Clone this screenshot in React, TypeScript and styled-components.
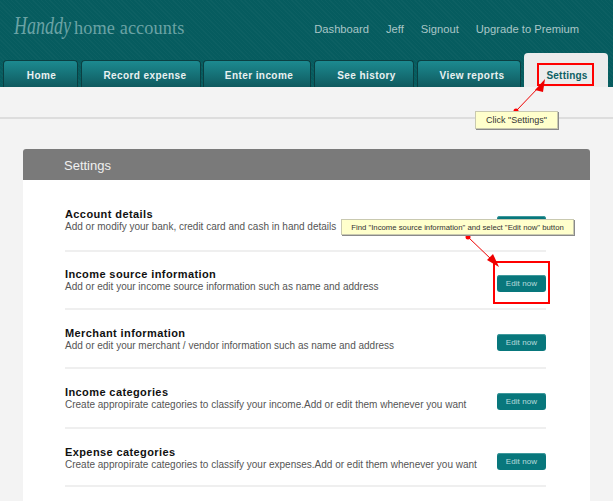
import React from "react";
import styled, { createGlobalStyle } from "styled-components";

const Global = createGlobalStyle`
  html, body { margin: 0; padding: 0; background: #f3f3f3; overflow: hidden; }
  body { font-family: "Liberation Sans", Arial, sans-serif; }
`;

const Page = styled.div`
  position: relative;
  display: flex;
  flex-direction: column;
  width: 613px;
  height: 501px;
  overflow: hidden;
  background: #f3f3f3;
`;

const Header = styled.header`
  height: 87px;
  flex: none;
  display: flex;
  flex-direction: column;
  justify-content: space-between;
  background-color: #065c5f;
  background-image: repeating-linear-gradient(45deg, rgba(255,255,255,0.025) 0 1px, transparent 1px 3px);
`;

const TopBar = styled.div`
  display: flex;
  justify-content: space-between;
  align-items: flex-start;
  padding: 13px 34px 0 14px;
`;

const Logo = styled.div`
  display: flex;
  align-items: baseline;
  color: #6ba3a5;
  font-family: "Liberation Serif", serif;
  line-height: 26px;
`;

const LogoScript = styled.span`
  display: inline-block;
  width: 57px;
  margin-right: 3px;
  font-size: 25px;
  font-style: italic;
  white-space: nowrap;
  transform: scaleX(0.72);
  transform-origin: left center;
`;

const LogoText = styled.span`
  font-size: 18.3px;
  letter-spacing: 0.1px;
`;

const TopNav = styled.nav`
  display: flex;
  gap: 17px;
  padding-top: 8px;
`;

const TopLink = styled.span`
  color: #a9c6c7;
  font-size: 11.2px;
  line-height: 16px;
`;

const Tabs = styled.div`
  display: flex;
  align-items: flex-end;
  padding-left: 3px;
`;

const Tab = styled.div<{ $w: number; $gap: number; $shift?: number; $active?: boolean }>`
  box-sizing: border-box;
  width: ${(p) => p.$w}px;
  height: ${(p) => (p.$active ? 34 : 27)}px;
  margin-right: ${(p) => p.$gap}px;
  padding: ${(p) => (p.$active ? "10px" : "2px")} 0 0 ${(p) => p.$shift ?? 0}px;
  display: flex;
  align-items: center;
  justify-content: center;
  border-radius: 4px 4px 0 0;
  font-size: 10px;
  font-weight: bold;
  letter-spacing: ${(p) => (p.$active ? 0.2 : 0.42)}px;
  color: ${(p) => (p.$active ? "#0c5f63" : "#e9f1f1")};
  border: ${(p) => (p.$active ? "0" : "1px solid #0b3f42")};
  border-bottom: 0;
  background: ${(p) => (p.$active ? "#ececec" : "linear-gradient(#1c8a90, #0f5a5f)")};
`;

const SubBar = styled.div`
  flex: none;
  height: 30px;
  border-bottom: 2px solid #dddddd;
`;

const Card = styled.section`
  flex: 1;
  margin: 30px 23px 0;
  background: #fff;
  border-radius: 3px 3px 0 0;
`;

const CardHead = styled.h2`
  box-sizing: border-box;
  margin: 0;
  height: 31px;
  padding: 2px 0 0 41px;
  display: flex;
  align-items: center;
  background: #7a7a7a;
  color: #f0f0f0;
  font-size: 13px;
  font-weight: normal;
  border-radius: 3px 3px 0 0;
`;

const Rows = styled.div`
  padding: 0 44px 0 42px;
`;

const Row = styled.div<{ $h: number; $pb: number; $lift: number }>`
  box-sizing: border-box;
  height: ${(p) => p.$h}px;
  padding-bottom: ${(p) => p.$pb}px;
  display: flex;
  justify-content: space-between;
  align-items: flex-end;
  border-bottom: 2px solid #efefef;
  & > div { margin-bottom: ${(p) => p.$lift}px; }
`;

const RowText = styled.div`
  display: flex;
  flex-direction: column;
`;

const RowTitle = styled.div`
  color: #111;
  font-size: 11px;
  font-weight: bold;
  line-height: 12px;
  letter-spacing: 0.4px;
`;

const RowDesc = styled.div`
  color: #555;
  font-size: 10px;
  line-height: 14px;
  margin-bottom: -2px;
  white-space: nowrap;
`;

const EditButton = styled.button`
  width: 49px;
  height: 17px;
  padding: 0;
  border: 0;
  border-radius: 3px;
  background: #08777c;
  box-shadow: inset 0 1px 0 #3f9a9d;
  color: #b9dcdc;
  font-family: inherit;
  font-size: 8px;
  letter-spacing: 0.1px;
`;

const Overlay = styled.svg`
  position: absolute;
  inset: 0;
  width: 613px;
  height: 501px;
  pointer-events: none;
`;

const Note = styled.div<{ $x: number; $y: number; $w: number; $h: number; $fs: number }>`
  position: absolute;
  box-sizing: border-box;
  left: ${(p) => p.$x}px;
  top: ${(p) => p.$y}px;
  width: ${(p) => p.$w}px;
  height: ${(p) => p.$h}px;
  display: flex;
  align-items: center;
  justify-content: center;
  background: #ffffcc;
  border: 1px solid #c9c9b0;
  box-shadow: 1px 1px 0 0 #8a8a8a;
  color: #333;
  font-size: ${(p) => p.$fs}px;
  white-space: nowrap;
`;

const tabs = [
  { label: "Home", w: 75, gap: 3, shift: 2 },
  { label: "Record expense", w: 120, gap: 2, shift: 8 },
  { label: "Enter income", w: 108, gap: 3, shift: 4 },
  { label: "See history", w: 100, gap: 3, shift: 5 },
  { label: "View reports", w: 104, gap: 3, shift: 6 },
];

const rows = [
  { title: "Account details", desc: "Add or modify your bank, credit card and cash in hand details", h: 72, pb: 17, lift: 1 },
  { title: "Income source information", desc: "Add or edit your income source information such as name and address", h: 58, pb: 16, lift: 0 },
  { title: "Merchant information", desc: "Add or edit your merchant / vendor information such as name and address", h: 59, pb: 16, lift: 0 },
  { title: "Income categories", desc: "Create appropirate categories to classify your income.Add or edit them whenever you want", h: 60, pb: 17, lift: 0 },
  { title: "Expense categories", desc: "Create appropirate categories to classify your expenses.Add or edit them whenever you want", h: 58, pb: 15, lift: 0 },
];

export default function App() {
  return (
    <Page>
      <Global />
      <Header>
        <TopBar>
          <Logo>
            <LogoScript>Handdy</LogoScript>
            <LogoText>home accounts</LogoText>
          </Logo>
          <TopNav>
            <TopLink>Dashboard</TopLink>
            <TopLink>Jeff</TopLink>
            <TopLink>Signout</TopLink>
            <TopLink>Upgrade to Premium</TopLink>
          </TopNav>
        </TopBar>
        <Tabs>
          {tabs.map((t) => (
            <Tab key={t.label} $w={t.w} $gap={t.gap} $shift={t.shift}>{t.label}</Tab>
          ))}
          <Tab $w={84} $gap={0} $shift={2} $active>Settings</Tab>
        </Tabs>
      </Header>
      <SubBar />
      <Card>
        <CardHead>Settings</CardHead>
        <Rows>
          {rows.map((r) => (
            <Row key={r.title} $h={r.h} $pb={r.pb} $lift={r.lift}>
              <RowText>
                <RowTitle>{r.title}</RowTitle>
                <RowDesc>{r.desc}</RowDesc>
              </RowText>
              <EditButton>Edit now</EditButton>
            </Row>
          ))}
        </Rows>
      </Card>
      <Overlay viewBox="0 0 613 501">
        <rect x="538" y="64" width="55" height="21" fill="none" stroke="#f00" strokeWidth="2" />
        <rect x="494" y="262" width="55" height="41" fill="none" stroke="#f00" strokeWidth="2" />
        <line x1="516" y1="111" x2="540" y2="86" stroke="#e00" strokeWidth="1" />
        <polygon points="545,79 535,90 543,92" fill="#e00" />
        <circle cx="516" cy="111" r="2.5" fill="#f00" />
        <line x1="468" y1="237" x2="492" y2="260" stroke="#e00" strokeWidth="1" />
        <polygon points="499,267 487,260 493,254" fill="#e00" />
        <circle cx="468" cy="237" r="2.5" fill="#f00" />
      </Overlay>
      <Note $x={475} $y={111} $w={83} $h={18} $fs={9}>Click "Settings"</Note>
      <Note $x={341} $y={219} $w={233} $h={16} $fs={7.75}>Find "Income source information" and select "Edit now" button</Note>
    </Page>
  );
}
